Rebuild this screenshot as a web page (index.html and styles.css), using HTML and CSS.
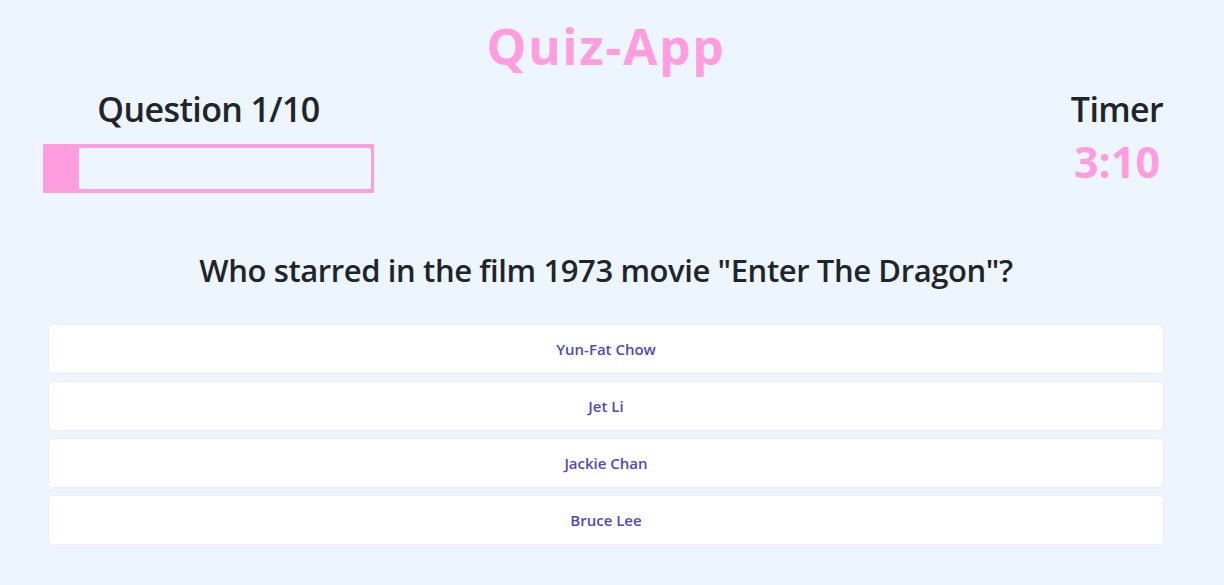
FILE: index.html
```html
<!DOCTYPE html>
<html lang="en">
<head>
<meta charset="utf-8">
<title>Quiz-App</title>
<link rel="stylesheet" href="styles.css">
</head>
<body>
<main class="app">
  <h1 class="title">Quiz-App</h1>
  <section class="status">
    <div class="progress-col">
      <h2 class="progress-label">Question 1/10</h2>
      <div class="progress-bar"><div class="progress-fill" style="width: 10%"></div></div>
    </div>
    <div class="timer-col">
      <h2 class="timer-label">Timer</h2>
      <div class="timer-value">3:10</div>
    </div>
  </section>
  <h2 class="question">Who starred in the film 1973 movie "Enter The Dragon"?</h2>
  <div class="answers">
    <button class="answer">Yun-Fat Chow</button>
    <button class="answer">Jet Li</button>
    <button class="answer">Jackie Chan</button>
    <button class="answer">Bruce Lee</button>
  </div>
</main>
</body>
</html>
```

FILE: styles.css
```css
html, body {
  margin: 0;
  padding: 0;
}
body {
  background: #edf5ff;
  font-family: "Open Sans", "Noto Sans", sans-serif;
  color: #212529;
  width: 1224px;
  height: 585px;
  overflow: hidden;
}
.app {
  padding: 15px 60px 0 48px;
}
.title {
  margin: 0;
  text-align: center;
  font-size: 50px;
  font-weight: 700;
  line-height: 62px;
  color: #ff9ddf;
  letter-spacing: 1.6px;
}
.status {
  margin-top: 9px;
  display: flex;
  justify-content: space-between;
  align-items: flex-start;
}
.progress-col {
  margin-left: -5px;
  width: 331px;
  display: flex;
  flex-direction: column;
  align-items: center;
}
.progress-label, .timer-label {
  margin: 0;
  font-size: 34px;
  font-weight: 600;
  line-height: 46px;
  letter-spacing: -0.6px;
  white-space: nowrap;
}
.progress-bar {
  margin-top: 12px;
  width: 331px;
  height: 49px;
  box-sizing: border-box;
  border: 4px solid #ff9ddf;
  border-right-width: 3px;
}
.progress-fill {
  height: 100%;
  background: #ff9ddf;
}
.timer-col {
  display: flex;
  flex-direction: column;
  align-items: center;
  width: 94px;
}
.timer-value {
  margin-top: 5px;
  font-size: 43px;
  font-weight: 700;
  line-height: 50px;
  color: #ff9ddf;
}
.question {
  margin: 55px 0 0;
  text-align: center;
  font-size: 31px;
  font-weight: 600;
  line-height: 44px;
  letter-spacing: -0.4px;
}
.answers {
  margin-top: 32px;
  display: flex;
  flex-direction: column;
  gap: 7px;
}
.answer {
  display: block;
  width: 100%;
  height: 50px;
  background: #ffffff;
  border: 1px solid #f5e8f3;
  border-radius: 5px;
  font-family: "Open Sans", "Noto Sans", sans-serif;
  font-size: 15px;
  font-weight: 600;
  color: #5049bd;
  cursor: pointer;
}
```
